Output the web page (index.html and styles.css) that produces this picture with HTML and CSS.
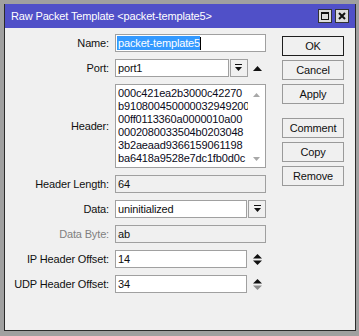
FILE: index.html
```html
<!DOCTYPE html>
<html lang="en">
<head>
  <meta charset="UTF-8" />
  <title>Raw Packet Template</title>
  <link rel="stylesheet" href="styles.css">
</head>
<body>
  <div class="window">
    <div class="titlebar">
      <span class="title">Raw Packet Template &lt;packet-template5&gt;</span>
      <div class="title-buttons">
        <span class="tbtn">
          <svg width="8" height="8" viewBox="0 0 8 8"><path d="M0 0h8v8H0z M1 2v5h6V2z" fill="#111" fill-rule="evenodd"/></svg>
        </span>
        <span class="tbtn">
          <svg width="8" height="8" viewBox="0 0 8 8"><path d="M1 1L7 7M7 1L1 7" stroke="#111" stroke-width="2"/></svg>
        </span>
      </div>
    </div>

    <div class="content">
      <div class="form">
        <label class="lbl">Name:</label>
        <div class="input"><span class="sel">packet-template5</span><span class="caret"></span></div>

        <label class="lbl">Port:</label>
        <div class="combo">
          <div class="input port-input">port1</div>
          <span class="drop">
            <svg width="9" height="8" viewBox="0 0 9 8"><path d="M1 0h7v1H1z M1 3h7L4.5 7z" fill="#111"/></svg>
          </span>
          <span class="arrows">
            <svg width="9" height="5" viewBox="0 0 9 5"><path d="M0 5L4.5 0L9 5z" fill="#111"/></svg>
          </span>
        </div>

        <label class="lbl">Header:</label>
        <div class="textarea">
          <div class="hex">000c421ea2b3000c42270<br>b910800450000032949200<br>00ff0113360a0000010a00<br>0002080033504b0203048<br>3b2aeaad9366159061198<br>ba6418a9528e7dc1fb0d0c</div>
          <div class="scroll">
            <svg width="7" height="4" viewBox="0 0 7 4"><path d="M0 4L3.5 0L7 4z" fill="#a8a8a8"/></svg>
            <svg width="7" height="4" viewBox="0 0 7 4"><path d="M0 0h7L3.5 4z" fill="#a8a8a8"/></svg>
          </div>
        </div>

        <label class="lbl">Header Length:</label>
        <div class="input readonly">64</div>

        <label class="lbl">Data:</label>
        <div class="combo">
          <div class="input">uninitialized</div>
          <span class="drop">
            <svg width="9" height="8" viewBox="0 0 9 8"><path d="M1 0h7v1H1z M1 3h7L4.5 7z" fill="#111"/></svg>
          </span>
        </div>

        <label class="lbl disabled">Data Byte:</label>
        <div class="input readonly">ab</div>

        <label class="lbl">IP Header Offset:</label>
        <div class="combo">
          <div class="input">14</div>
          <span class="arrows">
            <svg width="9" height="11" viewBox="0 0 9 11"><path d="M0 4.5L4.5 0L9 4.5z" fill="#111"/><path d="M0 6.5h9L4.5 11z" fill="#111"/></svg>
          </span>
        </div>

        <label class="lbl">UDP Header Offset:</label>
        <div class="combo">
          <div class="input">34</div>
          <span class="arrows">
            <svg width="9" height="11" viewBox="0 0 9 11"><path d="M0 4.5L4.5 0L9 4.5z" fill="#111"/><path d="M0 6.5h9L4.5 11z" fill="#8c8c8c"/></svg>
          </span>
        </div>
      </div>

      <div class="actions">
        <button class="btn default">OK</button>
        <button class="btn">Cancel</button>
        <button class="btn">Apply</button>
        <button class="btn sep">Comment</button>
        <button class="btn">Copy</button>
        <button class="btn">Remove</button>
      </div>
    </div>
  </div>
</body>
</html>
```

FILE: styles.css
```css
body {
  margin: 0;
  background-color: #a0a0a0;
  font-family: "Liberation Sans", Arial, sans-serif;
  font-size: 11px;
  letter-spacing: -0.15px;
  color: #111;
}
.window {
  margin: 4px 0 0 4px;
  width: 352px;
  height: 327px;
  box-sizing: border-box;
  border: 1px solid #2b2b2b;
  border-top: none;
  background-color: #f0f0f0;
}
.titlebar {
  height: 24px;
  background-color: #5050c8;
  color: #fff;
  display: flex;
  align-items: center;
  justify-content: space-between;
  padding: 0 6px;
}
.title-buttons {
  display: flex;
  gap: 3px;
}
.tbtn {
  width: 14px;
  height: 14px;
  box-sizing: border-box;
  border: 1px solid #333;
  background-color: #dcdcdc;
  display: flex;
  align-items: center;
  justify-content: center;
}
.content {
  display: flex;
  padding-top: 6px;
}
.form {
  display: grid;
  grid-template-columns: 105px 151px;
  grid-template-rows: 18px 18px 84px repeat(5, 18px);
  column-gap: 5px;
  row-gap: 7px;
  align-items: center;
}
.lbl {
  text-align: right;
  padding-right: 1px;
}
.lbl.disabled {
  color: #808080;
}
.input {
  height: 18px;
  box-sizing: border-box;
  border: 1px solid #a0a0a0;
  background-color: #fff;
  padding: 0 2px;
  display: flex;
  align-items: center;
  flex: 1;
  min-width: 0;
  white-space: nowrap;
}
.input.readonly {
  background-color: #f0f0f0;
}
.sel {
  background-color: #3399ff;
  color: #fff;
  margin-left: -1px;
  padding: 1px 0 1px 1px;
}
.caret {
  width: 1px;
  height: 13px;
  background-color: #000;
}
.combo {
  display: flex;
  align-items: center;
  gap: 1px;
  height: 18px;
}
.port-input {
  flex: none;
  width: 114px;
}
.drop {
  width: 18px;
  height: 18px;
  box-sizing: border-box;
  border: 1px solid #a0a0a0;
  background-color: #f0f0f0;
  display: flex;
  align-items: center;
  justify-content: center;
}
.arrows {
  width: 18px;
  display: flex;
  align-items: center;
  justify-content: center;
}
.textarea {
  height: 84px;
  box-sizing: border-box;
  border: 1px solid #a0a0a0;
  background-color: #fff;
  display: flex;
}
.hex {
  flex: 1;
  padding: 2px 0 0 2px;
  line-height: 13px;
  color: #0a0a20;
  white-space: nowrap;
  overflow: hidden;
}
.scroll {
  width: 17px;
  display: flex;
  flex-direction: column;
  justify-content: space-between;
  align-items: center;
  padding: 8px 0 6px;
}
.actions {
  display: flex;
  flex-direction: column;
  gap: 4px;
  margin: 2px 0 0 16px;
}
.btn {
  width: 62px;
  height: 20px;
  padding: 0;
  border: 1px solid #9a9a9a;
  background-color: #f0f0f0;
  font-family: inherit;
  font-size: 11px;
  letter-spacing: -0.15px;
  color: #111;
}
.btn.default {
  border-color: #1e1e1e;
}
.btn.sep {
  margin-top: 10px;
}
```
